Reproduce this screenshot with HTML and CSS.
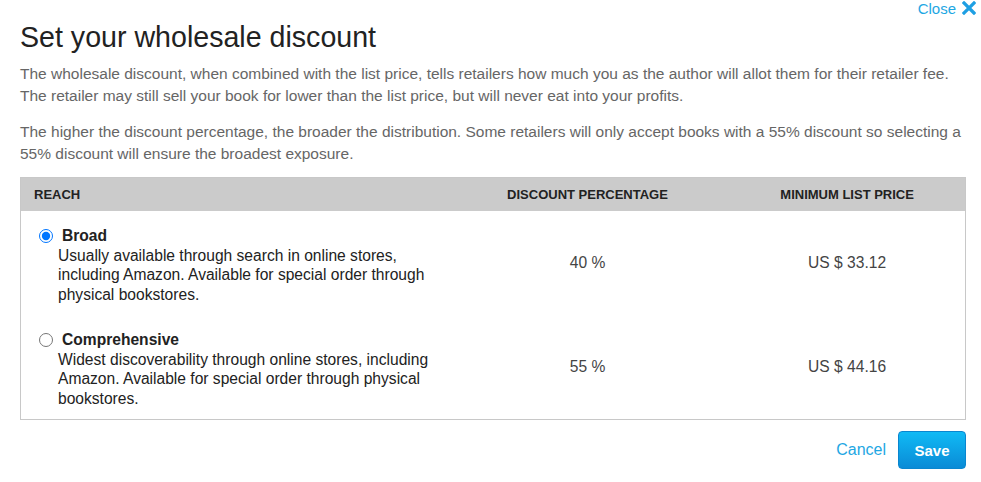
FILE: index.html
```html
<!DOCTYPE html>
<html lang="en">
<head>
<meta charset="utf-8">
<title>Set your wholesale discount</title>
<link rel="stylesheet" href="styles.css">
</head>
<body>
<div class="dialog">
  <div class="topbar">
    <a class="close" href="#">Close
      <svg class="close-icon" viewBox="0 0 14 14" width="14" height="14" aria-hidden="true"><path d="M2 2 L12 12 M12 2 L2 12" stroke="#1e9fe3" stroke-width="3.2" stroke-linecap="square"/></svg>
    </a>
  </div>
  <h1 class="title">Set your wholesale discount</h1>
  <p class="intro">The wholesale discount, when combined with the list price, tells retailers how much you as the author will allot them for their retailer fee. The retailer may still sell your book for lower than the list price, but will never eat into your profits.</p>
  <p class="intro last">The higher the discount percentage, the broader the distribution. Some retailers will only accept books with a 55% discount so selecting a 55% discount will ensure the broadest exposure.</p>
  <table class="discounts">
    <colgroup>
      <col class="c-reach">
      <col class="c-disc">
      <col class="c-price">
    </colgroup>
    <thead>
      <tr>
        <th class="h-reach">REACH</th>
        <th>DISCOUNT PERCENTAGE</th>
        <th>MINIMUM LIST PRICE</th>
      </tr>
    </thead>
    <tbody>
      <tr>
        <td class="reach">
          <label class="option">
            <input type="radio" name="reach" checked>
            <span class="opt-name">Broad</span>
          </label>
          <div class="opt-desc">Usually available through search in online stores, including Amazon. Available for special order through physical bookstores.</div>
        </td>
        <td class="val">40 %</td>
        <td class="val">US $ 33.12</td>
      </tr>
      <tr>
        <td class="reach">
          <label class="option">
            <input type="radio" name="reach">
            <span class="opt-name">Comprehensive</span>
          </label>
          <div class="opt-desc">Widest discoverability through online stores, including Amazon. Available for special order through physical bookstores.</div>
        </td>
        <td class="val">55 %</td>
        <td class="val">US $ 44.16</td>
      </tr>
    </tbody>
  </table>
  <div class="actions">
    <a class="cancel" href="#">Cancel</a>
    <button class="save" type="button">Save</button>
  </div>
</div>
</body>
</html>
```
FILE: styles.css
```css
html, body {
  margin: 0;
  padding: 0;
  background: #fff;
}
body {
  font-family: "Liberation Sans", Arial, sans-serif;
  color: #222;
}
.dialog {
  padding: 0 15px 0 20px;
}
.topbar {
  display: flex;
  justify-content: flex-end;
  height: 16px;
}
.close {
  display: flex;
  align-items: center;
  gap: 6px;
  color: #1ea7e3;
  font-size: 15px;
  text-decoration: none;
  line-height: 15px;
  margin-right: -10px;
}
.close-icon {
  display: block;
}
.title {
  font-size: 28.6px;
  font-weight: normal;
  color: #222;
  margin: 4px 0 9px;
  line-height: 34px;
}
.intro {
  font-size: 15.5px;
  line-height: 22px;
  color: #666;
  margin: 0 0 14px;
}
.intro.last {
  margin-bottom: 12px;
}
.discounts {
  width: 100%;
  border-collapse: collapse;
  table-layout: fixed;
  border: 1px solid #c8c8c8;
}
.c-reach { width: 45%; }
.c-disc { width: 30%; }
.c-price { width: 25%; }
.discounts th {
  background: #cbcbcb;
  font-size: 13px;
  font-weight: bold;
  color: #222;
  height: 33px;
  padding: 0 14px;
  text-align: center;
}
.discounts th.h-reach {
  text-align: left;
  padding-left: 13px;
}
.discounts td {
  font-size: 15.6px;
  line-height: 19.5px;
  color: #222;
  padding: 15px 14px 11px;
  vertical-align: middle;
}
.discounts td.val {
  text-align: center;
  color: #444;
  padding: 13px 14px;
}
.option {
  display: flex;
  align-items: center;
  gap: 9px;
}
.option input {
  margin: 0 0 0 4px;
  width: 14px;
  height: 14px;
}
.opt-name {
  font-weight: bold;
}
.opt-desc {
  padding-left: 23px;
}
.actions {
  display: flex;
  justify-content: flex-end;
  align-items: center;
  gap: 12px;
  margin-top: 11px;
}
.cancel {
  color: #1ea7e3;
  font-size: 16px;
  text-decoration: none;
}
.save {
  width: 68px;
  height: 38px;
  border: 1px solid #0a86cf;
  border-radius: 4px;
  background: linear-gradient(#10baf5, #0a8bd6);
  color: #fff;
  font-family: "Liberation Sans", Arial, sans-serif;
  font-size: 15px;
  font-weight: bold;
}
```
